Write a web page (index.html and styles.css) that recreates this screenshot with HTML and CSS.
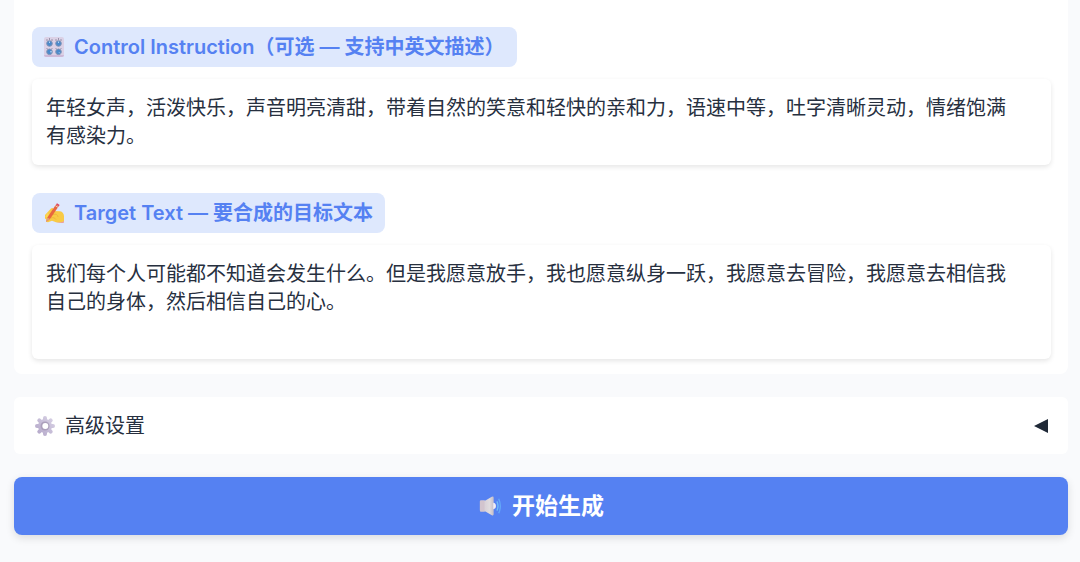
FILE: index.html
```html
<!DOCTYPE html>
<html lang="zh-CN">
<head>
<meta charset="utf-8">
<meta name="viewport" content="width=device-width, initial-scale=1">
<title>语音合成</title>
<link rel="stylesheet" href="styles.css">
</head>
<body class="page">
<main class="stack">
  <section class="card">
    <div class="field">
      <label class="tag" for="control">
        <svg class="icon" viewBox="0 0 20 20" aria-hidden="true">
          <rect width="20" height="20" rx="2" fill="#dbd1e6"/>
          <path d="M0 18h20a2 2 0 0 1-2 2H2a2 2 0 0 1-2-2z" fill="#cdb9d8"/>
          <g stroke="#9a93ab" stroke-width="1"><path d="M3 2v2M5.500 1v2M8 2v2M12 2v2M14.500 1v2M17 2v2M3 11v1M8 11v1M12 11v1M17 11v1"/></g>
          <g fill="#4a8acb" stroke="#8294b5" stroke-width="1"><circle cx="5.500" cy="6.500" r="2.800"/><circle cx="14.500" cy="6.500" r="2.800"/><circle cx="5.500" cy="14.800" r="2.800"/><circle cx="14.500" cy="14.800" r="2.800"/></g>
          <path d="M5.500 6V4.500M14.500 6V4.500M6 14.800h2M15 15.300l1 1" stroke="#b5d6f5" stroke-width="1"/>
        </svg>
        <span>Control Instruction（可选 — 支持中英文描述）</span>
      </label>
      <textarea class="box" id="control" rows="2">年轻女声，活泼快乐，声音明亮清甜，带着自然的笑意和轻快的亲和力，语速中等，吐字清晰灵动，情绪饱满有感染力。</textarea>
    </div>
    <div class="field">
      <label class="tag" for="target">
        <svg class="icon" viewBox="0 0 20 20" aria-hidden="true">
          <path d="M1 12 7 5.500c1-1 2.500-.5 2.200.8L9 8l7 .2c2.500.3 4 2.500 4 5V18c-2 1.500-5 2-8 1.200l-4-1.500-4 1.500c-2 0-2-1.500-1-2.200L1 15.500z" fill="#f8ca45"/>
          <path d="M9 11.500c3-1 5 .5 5 2.500M7 15c2-1 4 0 5 1.500" fill="none" stroke="#efb43d" stroke-width="1"/>
          <path d="M12 19.200c3 .8 6 .3 8-1.200v1.500c-2 .7-5 .8-8-.3z" fill="#ef8c83"/>
          <path d="m2 19 1.300-4.500L12 1.500l2.700 1.700L6 16z" fill="#e8663f"/>
          <path d="m12 1.500 1-1.300 2.700 1.700-1 1.300z" fill="#dc4660"/>
          <path d="m11.300 2.700 2.700 1.700" stroke="#e8c9c1" stroke-width="1"/>
          <path d="m2 19 1.300-4.500L6 16z" fill="#e5a16d"/>
          <path d="M1 13.500 3.500 10l1.300 1.200L3 14.500z" fill="#fbd655"/>
        </svg>
        <span>Target Text — 要合成的目标文本</span>
      </label>
      <textarea class="box" id="target" rows="3">我们每个人可能都不知道会发生什么。但是我愿意放手，我也愿意纵身一跃，我愿意去冒险，我愿意去相信我自己的身体，然后相信自己的心。</textarea>
    </div>
  </section>

  <button class="accordion" type="button" aria-expanded="false">
    <span class="accordion-title">
      <svg class="icon" viewBox="0 0 20 20" aria-hidden="true">
        <defs><linearGradient id="metal" x1="0" y1="20" x2="20" y2="0" gradientUnits="userSpaceOnUse"><stop stop-color="#b0a3c6"/><stop offset="1" stop-color="#dcd6e8"/></linearGradient></defs>
        <g stroke="url(#metal)" stroke-width="4" stroke-linecap="round"><path d="M10 2v16M2 10h16M4.300 4.300l11.400 11.400M15.700 4.300 4.300 15.700"/></g>
        <circle cx="10" cy="10" r="7" fill="url(#metal)"/>
        <circle cx="10" cy="10" r="4.500" fill="#ab9fbb"/>
        <circle cx="10.300" cy="10" r="3" fill="#fff"/>
      </svg>
      <span>高级设置</span>
    </span>
    <svg class="arrow" viewBox="0 0 14 14" aria-hidden="true"><path d="M0 7 14 0v14z" fill="#1f2937"/></svg>
  </button>

  <button class="generate" type="button">
    <svg class="speaker" viewBox="0 0 24 24" aria-hidden="true">
      <defs><linearGradient id="cone" x1="0" x2="1"><stop stop-color="#d0c5d0"/><stop offset=".7" stop-color="#e0dcdf"/><stop offset="1" stop-color="#c4bdc8"/></linearGradient></defs>
      <path d="M1 7q0-1 1-1h5l7-4q2-.8 2 1v18q0 1.800-2 1l-7-4H2q-1 0-1-1z" fill="url(#cone)"/>
      <path d="M1 7q0-1 1-1h4v12H2q-1 0-1-1z" fill="#d2c4ce"/>
      <path d="M15.500 8.500q3 .5 3 3.500t-3 3.500z" fill="#f1edf3"/>
      <path d="M19.500 7q2.500 5 0 10" fill="none" stroke="#6fbdf8" stroke-width="1.500"/>
      <path d="M21.500 4q3.500 8 0 16" fill="none" stroke="#64a8f8" stroke-width="1.500"/>
    </svg>
    <span>开始生成</span>
  </button>
</main>
</body>
</html>
```
FILE: styles.css
```css
* {
  box-sizing: border-box;
}

.page {
  margin: 0;
  background: #f9fafc;
  color: #27303f;
  font-family: Inter, "Noto Sans CJK SC", sans-serif;
  font-size: 20px;
  line-height: 28px;
}

.stack {
  display: flex;
  flex-direction: column;
  gap: 23px;
  padding: 0 12px 27px 14px;
}

.card {
  display: flex;
  flex-direction: column;
  gap: 28px;
  padding: 27px 17px 15px 18px;
  background: #fff;
  border-radius: 0 0 8px 8px;
}

.field {
  display: flex;
  flex-direction: column;
  align-items: flex-start;
  gap: 12px;
}

.tag {
  display: flex;
  align-items: center;
  gap: 10px;
  padding: 6px 12px;
  border-radius: 8px;
  background: #dee8fd;
  color: #5581f2;
  font-weight: 600;
}

.icon {
  flex: none;
  width: 20px;
  height: 20px;
}

.box {
  display: block;
  width: 100%;
  padding: 15px 30px 15px 14px;
  border: 0;
  border-radius: 6px;
  background: #fff;
  box-shadow: 0 2px 5px rgba(0, 0, 0, 0.1);
  color: inherit;
  font: inherit;
  overflow: hidden;
  resize: none;
}

.accordion {
  display: flex;
  align-items: center;
  justify-content: space-between;
  padding: 15px 20px 14px 21px;
  border: 0;
  border-radius: 6px;
  background: #fff;
  color: inherit;
  font: inherit;
}

.accordion-title {
  display: flex;
  align-items: center;
  gap: 10px;
}

.arrow {
  width: 14px;
  height: 14px;
}

.generate {
  display: flex;
  align-items: center;
  justify-content: center;
  gap: 10px;
  padding: 15px;
  border: 0;
  border-radius: 8px;
  background: #5581f2;
  box-shadow: 0 3px 8px rgba(0, 0, 0, 0.12);
  color: #fff;
  font: inherit;
  font-size: 23px;
  font-weight: 600;
  line-height: 28px;
}

.speaker {
  width: 24px;
  height: 22px;
}
```
